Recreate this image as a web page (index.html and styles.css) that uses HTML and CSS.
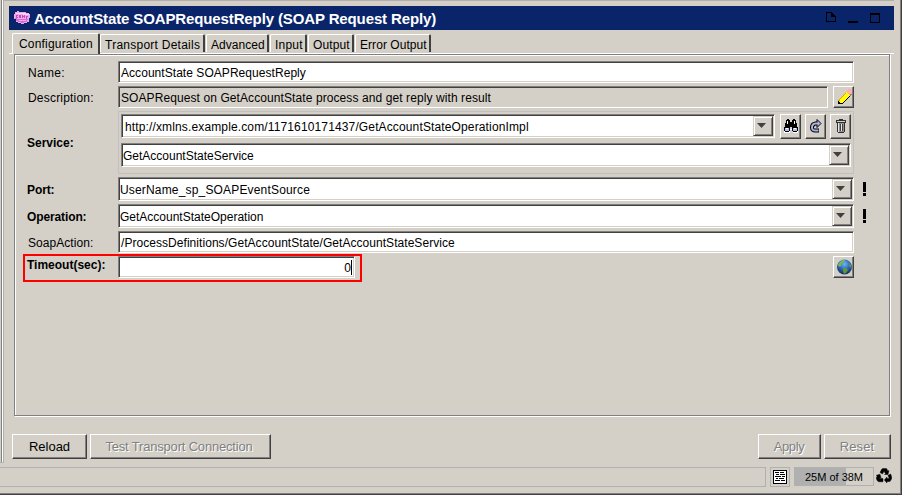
FILE: index.html
```html
<!DOCTYPE html>
<html lang="en">
<head>
<meta charset="utf-8">
<title>AccountState SOAPRequestReply</title>
<link rel="stylesheet" href="styles.css">
</head>
<body>
<div class="window">
  <div class="workspace">
    <div class="splitter"></div>
    <main class="editor">
      <header class="titlebar">
        <svg class="soap" width="16" height="14" viewBox="0 0 16 14" shape-rendering="crispEdges">
          <path fill="#f0a8ec" d="M1 1h2V0h2v1h7v1h3v1h1v4h-1v4h-2v1h-3v1H7v-1H4v-1H2V8H0V3h1z"/>
          <path fill="#ffd8f8" d="M2 2h10v1h3v1H9V3H2zM2 8h6v1H2z"/>
          <path fill="#d070d0" d="M1 7h2v1h11v1h-1v2h-3v1H7v-1H4v-1H2V8H1z"/>
          <path fill="#f0a8ec" d="M5 9h7v1H5z"/>
          <path fill="#c050b8" d="M2 4h2v1H3v1h1v1H2V6h0zM5 4h2v3H5zM8 4h1v3H8zM10 4h1v3h-1zM9 5h1v1H9zM12 5h2v1h-1v2h-1z"/>
        </svg>
        <h1>AccountState SOAPRequestReply (SOAP Request Reply)</h1>
        <svg class="winctl" width="56" height="14" viewBox="0 0 56 14" shape-rendering="crispEdges">
          <path fill="#000" d="M0 1h6v1h1v1h1v1h1v1h1v6H0zM1 2v8h8V6H5V2zM22 10h10v2H22zM44 2h10v10H44zM45 4v7h8V4z"/>
        </svg>
      </header>
      <nav class="tabs">
        <span class="tab active t-config">Configuration</span><span class="tab t-transport">Transport Details</span><span class="tab t-advanced">Advanced</span><span class="tab t-input">Input</span><span class="tab t-output">Output</span><span class="tab t-error">Error Output</span>
      </nav>
      <section class="panel">
        <div class="row">
          <label class="l-name">Name:</label>
          <div class="field v-name">AccountState SOAPRequestReply</div>
        </div>
        <div class="row">
          <label class="l-desc">Description:</label>
          <div class="field readonly v-desc">SOAPRequest on GetAccountState process and get reply with result</div>
          <button class="tool"><svg width="17" height="18" viewBox="0 0 17 18" shape-rendering="crispEdges">
            <path fill="#808080" d="M15 4h2v3h-1v1h-1v1h-1v1h-1v1h-1v1h-1v1h-1v1H9v1H8v1H5v-2h3z"/>
            <path fill="#000" d="M3 12h1v2h4v-1h1v-1h1v-1h1v-1h1V9h1V8h1V7h1v2h-1v1h-1v1h-1v1h-1v1h-1v1H9v1H8v1H3z"/>
            <path fill="#ff0" d="M4 11h1v-1h1V9h1V8h1V7h1V6h1V5h1V4h1v1h1v1h1v1h1v1h-1v1h-1v1h-1v1h-1v1h-1v1H9v1H8v1H5v-1H4z"/>
            <path fill="#e8a000" d="M3 12h1v-1h1v-1h1V9h1V8h1V7h1V6h1V5h1v1h-1v1H9v1H8v1H7v1H6v1H5v2H3z"/>
            <path fill="#ffb0a8" d="M11 3h1V2h1V1h3v1h1v4h-2v1h-1V6h-1V5h-1V4h-1z"/>
          </svg></button>
        </div>
        <div class="row">
          <label class="bold l-service">Service:</label>
          <div class="service">
            <div class="service-line">
              <div class="field combo v-url"><span>http://xmlns.example.com/1171610171437/GetAccountStateOperationImpl</span><i class="drop"></i></div>
              <button class="tool tall"><svg width="16" height="17" viewBox="0 0 16 17" shape-rendering="crispEdges">
                <path fill="#fff" d="M1 11h14v4h-5v-3H7v3H1z"/>
                <path fill="#000" d="M4 1h2v1h1v2h2V2h1V1h2v1h1v3h1v4h1v4h-1v1h-4v-1h-1V9H7v4H6v1H2v-1H1V9h1V5h1V2h1z"/>
                <path fill="#fff" d="M4 3h1v3H4zM11 3h1v3h-1z"/>
                <path fill="#b8b8f0" d="M2 10h4v3H2zM10 10h4v3h-4z"/>
                <path fill="#fff" d="M3 10h2v1H3zM11 10h2v1h-2z"/>
              </svg></button>
              <button class="tool tall"><svg width="16" height="17" viewBox="0 0 16 17">
                <path fill="none" stroke="#000" stroke-width="4" d="M10 5.500H7.500Q4 6 4 9.500T8 12.500H11"/>
                <path fill="#a8b4e8" stroke="#000" d="M9 1.500l4 4-4 4z"/>
                <path fill="none" stroke="#a8b4e8" stroke-width="2" d="M10.500 5.500H7.500Q4 6 4 9.500T8 12.500H10.500"/>
              </svg></button>
              <button class="tool tall"><svg width="16" height="17" viewBox="0 0 16 17" shape-rendering="crispEdges">
                <path fill="#303030" d="M6 1h4v1h3v3h-1v9h-1v1H5v-1H4V5H3V2h3z"/>
                <path fill="#d0d0d0" d="M4 3h8v1H4z"/>
                <path fill="#909090" d="M5 5h6v9H5z"/>
                <path fill="#e8e8e8" d="M5 5h1v9H5zM8 6h1v7H8z"/>
                <path fill="#404040" d="M7 6h1v7H7zM9 6h1v7H9z"/>
              </svg></button>
            </div>
            <div class="field combo v-service"><span>GetAccountStateService</span><i class="drop"></i></div>
          </div>
        </div>
        <div class="row">
          <label class="bold l-port">Port:</label>
          <div class="field combo v-port"><span>UserName_sp_SOAPEventSource</span><i class="drop"></i></div>
          <i class="required"></i>
        </div>
        <div class="row">
          <label class="bold l-operation">Operation:</label>
          <div class="field combo v-operation"><span>GetAccountStateOperation</span><i class="drop"></i></div>
          <i class="required"></i>
        </div>
        <div class="row">
          <label class="l-soap">SoapAction:</label>
          <div class="field v-soap">/ProcessDefinitions/GetAccountState/GetAccountStateService</div>
        </div>
        <div class="row timeout">
          <label class="bold l-timeout">Timeout(sec):</label>
          <div class="field v-timeout">0<i class="caret"></i></div>
          <button class="tool globe"><svg width="17" height="18" viewBox="0 0 17 18">
            <defs><radialGradient id="sea" cx=".5" cy=".3" r=".7"><stop offset="0" stop-color="#70b8f0"/><stop offset=".5" stop-color="#3068c0"/><stop offset="1" stop-color="#142860"/></radialGradient></defs>
            <circle cx="9.500" cy="9" r="7.500" fill="url(#sea)"/>
            <path fill="#78b850" d="M4 5l3-3 3 0-1 2-2 1-1 3-2 1-1-2z"/>
            <path fill="#609838" d="M8 10l3 0 2 2-2 3-2 1-1-3zM14 5l2 2 .5 3-2-1z"/>
          </svg></button>
          <div class="highlight"></div>
        </div>
      </section>
      <footer class="actions">
        <button class="btn b-reload">Reload</button>
        <button class="btn b-test" disabled>Test Transport Connection</button>
        <span class="spring"></span>
        <button class="btn b-apply" disabled>Apply</button>
        <button class="btn b-reset" disabled>Reset</button>
      </footer>
    </main>
  </div>
  <div class="status">
    <div class="message"></div>
    <div class="log"><svg width="16" height="16" viewBox="0 0 16 16" shape-rendering="crispEdges">
      <path fill="#fff" d="M1 1h14v14H1z"/>
      <path fill="#000" d="M1 1h14v14H1zM2 2v12h12V2z" fill-rule="evenodd"/>
      <path fill="#000" d="M3 3h4v1H3zM8 3h4v1H8zM4 5h3v1H4zM8 5h5v1H8zM3 7h6v1H3zM10 7h3v1h-3zM4 9h2v1H4zM7 9h5v1H7zM3 11h5v1H3zM9 11h4v1H9z"/>
    </svg></div>
    <div class="memory"><span>25M of 38M</span></div>
    <svg class="recycle" width="16" height="16" viewBox="0 0 16 16">
      <g fill="#000" stroke="#000" stroke-width=".4"><path d="M4 4.500L5.500 1.500Q6 .5 7 .5H10.500L12 3l1-.5-1 4H8.500l1-.7L8 3.200 6.500 6z"/>
      <path d="M12 7.200L14.700 6 15.700 9.200Q16 10 15.500 11L14 13.500H11V15L8.300 12 11 9v1.500h2.200z"/>
      <path d="M7 10.500V13.800H3Q2 13.700 1.500 13L.4 11Q0 10 .5 9.200L1.300 8 .2 7.300 4 6.300 5.200 10.200 4 9.500 3.500 10.500z"/></g>
    </svg>
  </div>
</div>
</body>
</html>
```
FILE: styles.css
```css
* { box-sizing: border-box; }
body {
  margin: 0;
  width: 902px;
  height: 495px;
  overflow: hidden;
  background: #d4d0c8;
  font: 12px/14px "Liberation Sans", Arial, sans-serif;
  color: #000;
}
.window {
  width: 902px;
  height: 495px;
  display: flex;
  flex-direction: column;
  border: solid;
  border-width: 0 1px 1px 0;
  border-color: #404040;
  box-shadow: inset -1px -1px #808080;
}
.workspace { display: flex; height: 463px; }
.splitter {
  width: 4px;
  height: 463px;
  flex: none;
  background: linear-gradient(90deg, #d4d0c8 0 1px, #808080 1px 2px, #fff 2px 3px, #b0b0b0 3px);
  border-bottom: 1px solid #b0b0b0;
}
.editor {
  width: 890px;
  border-top: 1px solid #b0aeae;
  padding: 5px 0 0 5px;
}
.titlebar {
  height: 24px;
  background: #0a246a;
  display: flex;
  align-items: center;
  padding-left: 5px;
}
.soap { flex: none; }
h1 {
  margin: 1px 0 0 4px;
  flex: 1;
  white-space: nowrap;
  color: #fff;
  font-size: 15px;
  line-height: 18px;
  letter-spacing: -.12px;
}
.winctl { flex: none; margin: 0 12px 0 0; }
.tabs {
  height: 24px;
  padding: 2px 0 0 3px;
  display: flex;
  align-items: flex-end;
  gap: 1px;
  box-shadow: inset 0 -1px #fff;
  width: 885px;
}
.tab {
  height: 18px;
  margin-bottom: 2px;
  padding: 3px 0 0 4px;
  white-space: nowrap;
  border: solid;
  border-width: 1px 2px 0 1px;
  border-color: #fff #404040 #fff #fff;
  border-radius: 2px 2px 0 0;
}
.tab.active {
  height: 21px;
  margin: 0 -1px 0 0;
  padding: 3px 0 0 6px;
  background: #d4d0c8;
}
.t-config { width: 88px; letter-spacing: .185px; }
.t-transport { width: 105px; letter-spacing: .25px; }
.t-advanced { width: 63px; letter-spacing: .032px; }
.t-input { width: 37px; letter-spacing: .228px; }
.t-output { width: 46px; letter-spacing: .115px; }
.t-error { width: 76px; letter-spacing: .052px; }
.panel {
  margin: 0 0 0 5px;
  width: 876px;
  height: 362px;
  padding: 6px 0 0 13px;
  display: flex;
  flex-direction: column;
  gap: 3px;
  border: 1px solid #808080;
  box-shadow: 1px 1px #fff, inset 1px 1px #fff;
}
.row { display: flex; align-items: center; position: relative; }
label { width: 90px; flex: none; white-space: nowrap; padding-top: 1px; }
.bold { font-weight: bold; margin-left: -1px; width: 91px; }
.l-name { letter-spacing: .3px; }
.l-desc { letter-spacing: .2px; }
.l-port { letter-spacing: -.1px; }
.l-operation { letter-spacing: -.119px; }
.l-soap { letter-spacing: .05px; }
.field {
  width: 736px;
  height: 22px;
  padding: 3px 0 0 1px;
  line-height: 16px;
  white-space: nowrap;
  background: #fff;
  border: 1px solid;
  border-color: #808080 #fff #fff #808080;
  box-shadow: inset 1px 1px #404040, inset -1px -1px #d4d0c8;
}
.field.readonly {
  background: #d4d0c8;
  width: 710px;
}
.combo {
  height: 24px;
  padding: 1px;
  display: flex;
  align-items: center;
  justify-content: space-between;
}
.combo span { padding-top: 2px; }
.drop {
  width: 20px;
  height: 20px;
  flex: none;
  display: grid;
  place-items: center;
  padding: 0 3px 1px 0;
  background: #d4d0c8;
  border: 1px solid;
  border-color: #d4d0c8 #404040 #404040 #d4d0c8;
  box-shadow: inset 1px 1px #fff, inset -1px -1px #808080;
}
.drop::after {
  content: "";
  width: 9px;
  height: 5px;
  background: #404040;
  clip-path: polygon(0 0, 100% 0, 50% 100%);
}
.v-name { letter-spacing: .05px; padding-left: 2px; }
.v-desc { letter-spacing: .09px; padding-left: 2px; }
.v-url { width: 654px; letter-spacing: .135px; padding-left: 3px; }
.v-service { width: 730px; }
.v-port { letter-spacing: .17px; }
.v-soap { letter-spacing: .05px; padding-left: 2px; }
.tool {
  width: 21px;
  height: 22px;
  flex: none;
  margin: 0 0 0 5px;
  padding: 0;
  display: grid;
  place-items: center;
  background: #d4d0c8;
  border: 1px solid;
  border-color: #fff #404040 #404040 #fff;
  box-shadow: inset -1px -1px #808080;
}
.tool.tall { height: 25px; margin-left: 4px; }
.service-line .tool:nth-child(2) { margin-left: 5px; }
.service {
  width: 736px;
  height: 63px;
  padding: 2px 0 0 2px;
  border: 1px solid #c0c0c0;
}
.service-line { display: flex; height: 29px; align-items: flex-start; }
.required {
  width: 3px;
  height: 14px;
  margin-left: 9px;
  background: linear-gradient(#000 0 10px, transparent 10px 11px, #000 11px);
}
.timeout .field {
  width: 237px;
  text-align: right;
  padding-right: 2px;
}
.timeout label { margin-top: -6px; }
.caret {
  display: inline-block;
  width: 1px;
  height: 15px;
  background: #000;
  vertical-align: top;
}
.globe { margin-left: auto; margin-right: 35px; }
.highlight {
  position: absolute;
  left: -5px;
  top: -2px;
  width: 339px;
  height: 28px;
  border: 2px solid #f00;
}
.actions { display: flex; margin-top: 18px; padding-left: 3px; gap: 3px; width: 882px; }
.spring { flex: 1; }
.btn {
  height: 25px;
  padding: 0 1px 0 0;
  font: 13px/18px "Liberation Sans", Arial, sans-serif;
  white-space: nowrap;
  color: #000;
  background: #d4d0c8;
  border: 1px solid;
  border-color: #fff #404040 #404040 #fff;
  box-shadow: inset -1px -1px #808080;
}
.btn:disabled { color: #808080; text-shadow: 1px 1px #fff; }
.b-reload { width: 75px; padding-right: 0; }
.b-test { width: 181px; letter-spacing: -.183px; padding-right: 3px; }
.b-apply { width: 63px; letter-spacing: -.4px; }
.b-reset { width: 67px; letter-spacing: .1px; }
.status { display: flex; margin-top: 4px; height: 20px; }
.message { width: 766px; border: 1px solid #b0b0b0; border-left: 0; }
.log {
  width: 20px;
  margin-left: 4px;
  display: grid;
  place-items: center;
  border: 1px solid #b0b0b0;
}
.memory {
  width: 80px;
  height: 19px;
  margin-left: 4px;
  border: 1px solid #b0b0b0;
  background: linear-gradient(90deg, #b0b0b0 51px, transparent 51px);
  font-size: 11px;
  line-height: 18px;
  text-align: center;
}
.recycle { margin: 1px 0 0 2px; }
```
